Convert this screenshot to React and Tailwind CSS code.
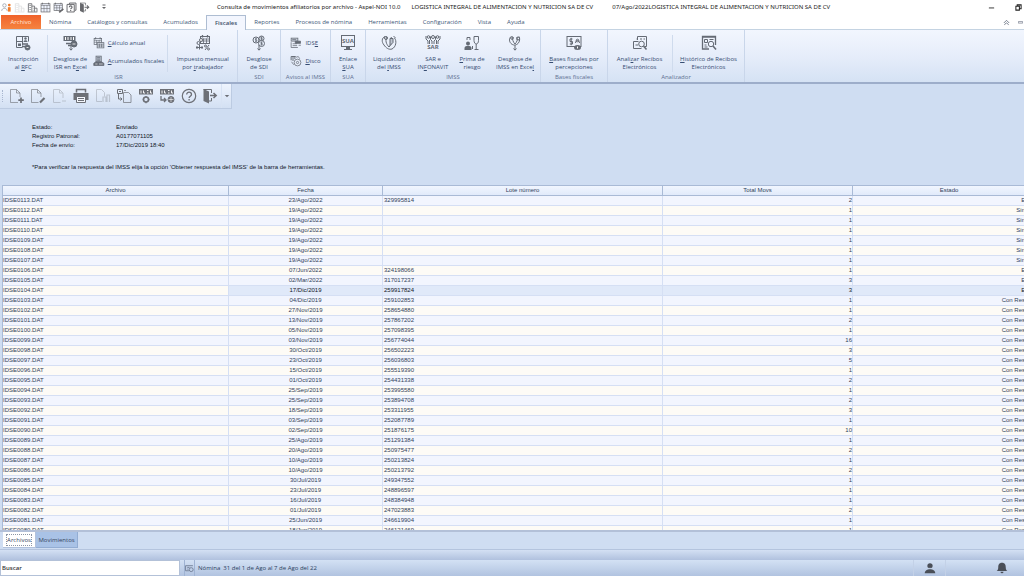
import React from "react";

function Icon({ className = "size-4", children }) {
  return (
    <svg viewBox="0 0 16 16" className={`shrink-0 ${className}`} fill="none" stroke="currentColor" strokeWidth="1" aria-hidden="true">
      {children}
    </svg>
  );
}

const solid = { fill: "currentColor", stroke: "none" };

/* small coin with a peso mark */
const Coin = ({ x, y, r = 3 }) => (
  <g>
    <circle cx={x} cy={y} r={r} fill="#e9f0fc" />
    <path d={`M${x + 1} ${y - 1.3}h-1.6v1.3h1.4v1.3h-1.8M${x} ${y - 2}v4`} strokeWidth="0.7" />
  </g>
);
const Cal = ({ x, y, w, h }) => (
  <g>
    <rect x={x} y={y + 1} width={w} height={h - 1} fill="#eef3fd" />
    <path d={`M${x} ${y + 3.5}h${w}M${x + w / 3} ${y + 3}v${h - 3}M${x + (2 * w) / 3} ${y + 3}v${h - 3}M${x} ${y + (h + 3) / 2}h${w}`} strokeWidth="0.8" />
    <path d={`M${x + 2} ${y - 0.5}v2.5M${x + w - 2} ${y - 0.5}v2.5`} strokeWidth="1.3" />
  </g>
);

const icons = {
  rfc: (
    <>
      <path d="M1.500 1.500h12v5M1.500 1.500v11h6M1.500 6.500h6M7.500 1.500v9" />
      <rect x="3" y="8.500" width="3" height="2.500" {...solid} />
      <path d="M8.500 7c0-2.500 4-2.500 4 0z" {...solid} />
      <circle cx="10.500" cy="3.500" r="1.200" {...solid} />
      <path d="M7 9h6M7 11.500h4" strokeWidth="1.500" />
      <circle cx="12.500" cy="12.500" r="2.500" fill="currentColor" />
      <path d="M11.500 12.500h2" stroke="#fff" strokeWidth="0.800" />
    </>
  ),
  desgloseIsr: (
    <>
      <rect x="1.500" y="1" width="12" height="5" {...solid} />
      <path d="M3.500 2v3M6 2v3M9 2v3M11.500 2v3" stroke="#fff" />
      <path d="M4 8.500h5M6 10.500h3" strokeWidth="1.400" />
      <circle cx="12" cy="9" r="3" fill="currentColor" />
      <path d="M10.500 9h3" stroke="#fff" strokeWidth="0.800" />
      <path d="M9 11v4M7.500 13.500l1.500 1.700 1.500-1.700" />
    </>
  ),
  calculo: (
    <>
      <Cal x={1.5} y={1} w={10} h={9} />
      <rect x="5.500" y="7.500" width="9" height="7" fill="#eef3fd" />
      <path d="M5.500 9.500h9M8.500 9v5M11.500 9v5M5.500 12h9" />
    </>
  ),
  acumulados: (
    <>
      <rect x="4" y="1.500" width="7" height="8" fill="#b5bdca" />
      <path d="M5.500 3.500h4M5.500 5.500h4M5.500 7.500h4" />
      <path d="M1 14v-3l3-2h7l3.500 2v3z" fill="currentColor" />
      <path d="M3 12h3M8 12h5" stroke="#fff" strokeWidth="0.800" />
    </>
  ),
  impuesto: (
    <>
      <Cal x={5.500} y={0.5} w={9} h={8} />
      <circle cx="3.500" cy="8" r="1.500" />
      <circle cx="6" cy="5" r="1.500" fill="#fff" />
      <path d="M1 12.500h7M4.500 9.500v5M2 11v3M7 11v3" />
      <path d="M14 10l-4 5" />
      <circle cx="10.500" cy="11" r="1" />
      <circle cx="13.500" cy="14" r="1" />
    </>
  ),
  sdi: (
    <>
      <Coin x={5} y={5} />
      <Coin x={10.500} y={3.500} r={2.5} />
      <Coin x={10.500} y={8.500} />
      <path d="M8 10v5M6.500 13.500l1.500 1.700 1.500-1.700" />
    </>
  ),
  idse: (
    <>
      <rect x="1.500" y="1.500" width="9" height="4" fill="#c5ccd7" />
      <path d="M3 3.500h5M1.500 7v7h9M3.500 9h6M3.500 11.500h6" />
      <path d="M7 5.500h7v3H7z" fill="currentColor" />
      <path d="M11.500 11h3" />
    </>
  ),
  disco: (
    <>
      <path d="M1.500 2v5M4 2v6M6.500 1.500v4M1.500 2h6" strokeWidth="1.300" />
      <circle cx="10" cy="10" r="4.500" fill="#e5ecf8" />
      <circle cx="10" cy="10" r="1.500" />
      <path d="M2 9l3 4M8 3l3-1 2 3" />
    </>
  ),
  liquidacion: (
    <>
      <path d="M4 1.500C.5 3 .5 7 3 10c2 3 5 5 8 4 4-2 5-8 2.500-11" />
      <path d="M6 2c-2 3-1 7 2 10M10 2c2 3 1 7-2 10" />
      <circle cx="5" cy="3" r="1.500" />
      <path d="M9 3.500h3v4l-3 3z" fill="#c0c7d3" />
      <path d="M12.500 1l2 2" />
    </>
  ),
  desgloseImss: (
    <>
      <path d="M4 1.500c-2 2-2 5 0 7s5 2 7 0 2-5 1-7" />
      <path d="M6 2c-1 2 0 5 2 7M10 2c1 2 0 5-2 7" />
      <circle cx="5" cy="3" r="1.300" />
      <circle cx="11" cy="3.500" r="1.500" />
      <path d="M8 10v5M6.500 13.500l1.500 1.700 1.500-1.700" />
    </>
  ),
  prima: (
    <>
      <circle cx="4" cy="8.500" r="2" {...solid} />
      <path d="M.5 15v-2c0-3 7-3 7 0v2z" {...solid} />
      <path d="M3 5V2.500h3V5M10 1.500h4.500v4c0 2-1 3.500-2.200 3.500S10 7.500 10 5.500z" />
      <path d="M12.200 9v5M10.500 14.500h4M8.500 11v3" />
    </>
  ),
  bases: (
    <>
      <rect x="1" y="1.500" width="14" height="10" />
      <path d="M6.500 4H4v2.500h2.500V9H3.800M5.200 2.800v7.500" />
      <path d="M9.500 8a2 2.500 0 0 1 4 0" />
      <circle cx="11.500" cy="5.500" r="1.300" />
      <ellipse cx="11.500" cy="12.500" rx="3.500" ry="2.500" {...solid} />
      <path d="M11.500 11.500v2" stroke="#fff" />
    </>
  ),
  analizar: (
    <>
      <path d="M5.500 5V1.500h9v10h-1.500M8 4h2M11.500 4h1.500" />
      <path d="M6.500 6.500h-5v7h8M3.500 10h2.500M5.500 4h-1" />
      <circle cx="9.500" cy="9" r="2.800" fill="#eef3fd" />
      <path d="M11.500 11l3 3.500" strokeWidth="1.600" />
    </>
  ),
  historico: (
    <>
      <path d="M8 14H1.500V1.500h13V10M1.500 2h13" strokeWidth="1.300" />
      <path d="M3.500 4.500h3v3h-3zM8.500 4.500h4M3.500 10h2M3.500 12h3" />
      <circle cx="10" cy="9" r="2.700" fill="#eef3fd" />
      <path d="M12 11l3 3.500" strokeWidth="1.600" />
    </>
  ),
  newFile: (
    <>
      <path d="M9 14.500H1.500v-13h6l3.500 3.500v4M7.500 1.500v3.500H11" strokeOpacity="0.600" />
      <path d="M12 9.500v5.500M9.300 12.200h5.500" strokeWidth="1.700" />
    </>
  ),
  editFile: (
    <>
      <path d="M8.500 14.500H1.500v-13h6l3.500 3.500v4M7.500 1.500v3.500H11" strokeOpacity="0.600" />
      <path d="M10 14.500l4.500-4.500" strokeWidth="2.200" />
    </>
  ),
  delFile: <path d="M8.500 14.500H1.500v-13h6l3.500 3.500v5M7.500 1.500v3.500H11M10 13h4" />,
  print: (
    <>
      <path d="M3.500 4.500v-3h9v3" strokeWidth="1.500" />
      <path d="M.5 5h15v7h-15z" {...solid} />
      <path d="M3.500 8.500h9v6h-9z" fill="#f5f8fe" />
      <path d="M5 10.500h6M5 12.500h6" />
    </>
  ),
  copy: (
    <>
      <path d="M7 13.500H1.500v-12h5l3 3v4" />
      <path d="M8 14V9h3v5M12 14V7h2.500v7" strokeWidth="1.200" />
    </>
  ),
  transfer: (
    <>
      <path d="M1.500 1.500h5v4h-5zM2.500 6v5h3M4.500 9.500L6 11l-1.500 1.500M3 3.500h2" />
      <path d="M7.500 4.500h5l2.500 2.500v7.500H7.500zM8 2.500h2" strokeOpacity="0.700" />
    </>
  ),
  idseGear: (
    <>
      <rect x="1" y="1" width="14" height="5.500" {...solid} />
      <path d="M3 2.500v3M5.500 2.500v2.500h1.500M9 2.500h1.500M9 5h1.500M12.500 2.500v2.500h1.500" stroke="#fff" strokeWidth="0.900" />
      <circle cx="8" cy="11.500" r="2.500" strokeWidth="1.600" />
      <path d="M8 8v1M8 14v1.200M4.700 11.500h1M10.500 11.500h1" strokeWidth="1.300" />
    </>
  ),
  idseWorld: (
    <>
      <rect x="1" y="1" width="14" height="5.500" {...solid} />
      <path d="M3 2.500v3M5.500 2.500v2.500h1.500M9 2.500h1.500M9 5h1.500M12.500 2.500v2.500h1.500" stroke="#fff" strokeWidth="0.900" />
      <path d="M2 8v4h5M5 10l2 2-2 2" strokeWidth="1.300" />
      <circle cx="12" cy="11.500" r="3" fill="currentColor" />
      <path d="M9.500 11.500h5M12 9v5" stroke="#fff" strokeWidth="0.600" />
    </>
  ),
  exit: (
    <>
      <path d="M1.500 1.500h8v3.500M9.500 10v3h-3" />
      <path d="M1.500 1l5.500 2.500v12L1.500 13z" {...solid} />
      <path d="M8 7.500h5.500M11.500 5l2.700 2.500-2.700 2.500" strokeWidth="1.500" />
    </>
  ),
  doc: (
    <path d="M2 14V2.500h5V14M7 6h4v8M11 9h3.500v5M1 14.500h14M3.500 5h2M3.500 8h2M3.500 11h2M8.500 9h1M8.500 12h1" strokeWidth="1.200" />
  ),
  cal: <Cal x={1.5} y={1.5} w={13} h={13} />,
  calEdit: (
    <>
      <Cal x={1.5} y={1.5} w={12} h={11} />
      <path d="M9 15l6-5" strokeWidth="2.500" />
    </>
  ),
  helpPages: (
    <>
      <path d="M5 3V1.500h9.500V12H13" strokeWidth="1.400" />
      <path d="M1.500 3.500H12v11H1.500z" strokeWidth="1.400" />
      <path d="M4.800 7.500c0-2.500 4-2.500 4 0 0 1.500-2 1.500-2 3M6.800 11.500v1.500" strokeWidth="1.600" />
    </>
  ),
};

const MAIN_TABS = ["Nómina", "Catálogos y consultas", "Acumulados", "Fiscales", "Reportes", "Procesos de nómina", "Herramientas", "Configuración", "Vista", "Ayuda"];

/* An underscore marks the access key that follows it. */
function Label({ text }) {
  const at = text.indexOf("_");
  if (at < 0) return <>{text}</>;
  return (
    <>
      {text.slice(0, at)}
      <u>{text[at + 1]}</u>
      {text.slice(at + 2)}
    </>
  );
}

function Tool({ icon, lines, width, children }) {
  return (
    <button type="button" className={`flex shrink-0 flex-col items-center gap-1 whitespace-nowrap ${width}`}>
      <span className="flex text-[#656b75]">{children || <Icon>{icons[icon]}</Icon>}</span>
      <span className="block text-center leading-[8px]">
        {lines.map((l) => (
          <span key={l} className="block"><Label text={l} /></span>
        ))}
      </span>
    </button>
  );
}

function SmallTool({ icon, text }) {
  return (
    <button type="button" className="flex items-center gap-[3px] whitespace-nowrap">
      <span className="flex text-[#656b75]"><Icon className="size-3">{icons[icon]}</Icon></span>
      <span><Label text={text} /></span>
    </button>
  );
}

function Group({ title, width, children }) {
  return (
    <section className={`flex shrink-0 flex-col border-r border-[#c9d6ea] pt-[5px] ${width}`}>
      <div className="flex h-[37px] justify-around">{children}</div>
      <h2 className="text-center leading-[10px] text-[#5f7192]">{title}</h2>
    </section>
  );
}

const Divider = () => <span className="w-px self-stretch bg-[#cfdbed]" />;

const ROWS = [
  ["0113", "23/Ago/2022", "329995814", 2, "Enviado"],
  ["0112", "19/Ago/2022", "", 1, "Sin enviar"],
  ["0111", "19/Ago/2022", "", 1, "Sin enviar"],
  ["0110", "19/Ago/2022", "", 1, "Sin enviar"],
  ["0109", "19/Ago/2022", "", 1, "Sin enviar"],
  ["0108", "19/Ago/2022", "", 1, "Sin enviar"],
  ["0107", "19/Ago/2022", "", 1, "Sin enviar"],
  ["0106", "07/Jun/2022", "324198066", 1, "Enviado"],
  ["0105", "02/Mar/2022", "317017237", 3, "Enviado"],
  ["0104", "17/Dic/2019", "259917824", 3, "Enviado"],
  ["0103", "04/Dic/2019", "259102853", 1, "Con Respuesta"],
  ["0102", "27/Nov/2019", "258654880", 1, "Con Respuesta"],
  ["0101", "13/Nov/2019", "257867202", 2, "Con Respuesta"],
  ["0100", "05/Nov/2019", "257098395", 1, "Con Respuesta"],
  ["0099", "03/Nov/2019", "256774044", 16, "Con Respuesta"],
  ["0098", "30/Oct/2019", "256502223", 3, "Con Respuesta"],
  ["0097", "23/Oct/2019", "256036803", 5, "Con Respuesta"],
  ["0096", "15/Oct/2019", "255519390", 1, "Con Respuesta"],
  ["0095", "01/Oct/2019", "254431338", 2, "Con Respuesta"],
  ["0094", "25/Sep/2019", "253995580", 1, "Con Respuesta"],
  ["0093", "25/Sep/2019", "253894708", 2, "Con Respuesta"],
  ["0092", "18/Sep/2019", "253311955", 3, "Con Respuesta"],
  ["0091", "03/Sep/2019", "252087789", 1, "Con Respuesta"],
  ["0090", "02/Sep/2019", "251876175", 10, "Con Respuesta"],
  ["0089", "25/Ago/2019", "251291384", 1, "Con Respuesta"],
  ["0088", "20/Ago/2019", "250975477", 2, "Con Respuesta"],
  ["0087", "10/Ago/2019", "250213824", 1, "Con Respuesta"],
  ["0086", "10/Ago/2019", "250213792", 2, "Con Respuesta"],
  ["0085", "30/Jul/2019", "249347552", 1, "Con Respuesta"],
  ["0084", "23/Jul/2019", "248896597", 1, "Con Respuesta"],
  ["0083", "16/Jul/2019", "248384948", 1, "Con Respuesta"],
  ["0082", "01/Jul/2019", "247023883", 2, "Con Respuesta"],
  ["0081", "25/Jun/2019", "246619904", 1, "Con Respuesta"],
  ["0080", "18/Jun/2019", "246121469", 1, "Con Respuesta"],
];
const SELECTED = "0104";

const TOOLBAR = [
  ["newFile", "Nuevo", false],
  ["editFile", "Editar", false],
  ["delFile", "Eliminar", true],
  ["print", "Imprimir", false],
  ["copy", "Copiar", true],
  ["transfer", "Transferir", false],
  ["idseGear", "Configurar IDSE", false],
  ["idseWorld", "Obtener respuesta del IMSS", false],
  ["help", "Ayuda", false],
  ["exit", "Salir", false],
];

function TitleBar() {
  const quick = [["doc", "Departamentos", true], ["doc", "Empresas", false], ["cal", "Calendario", false], ["calEdit", "Editar calendario", false], ["helpPages", "Ayuda", false], ["exit", "Salir", false]];
  return (
    <header className="grid h-[14px] shrink-0 grid-cols-[215px_1fr_auto] items-center bg-white text-[#222]">
      <div className="flex items-center gap-[2px] pl-[1px] text-[#66676b]">
        <button type="button" aria-label="Trabajadores" className="flex">
          <Icon className="size-[11px]">
            <circle cx="5" cy="5" r="2.500" stroke="#8b93a0" />
            <path d="M1 13c0-5 8-5 8 0" stroke="#8b93a0" />
            <circle cx="12" cy="4.500" r="2" fill="#f07c2c" stroke="none" />
            <path d="M10 7.500h4V14h-4z" fill="#f07c2c" stroke="none" />
          </Icon>
        </button>
        {quick.map(([k, label, off], i) => (
          <button key={i} type="button" aria-label={label} disabled={off} className="flex disabled:opacity-20">
            <Icon className="size-[11px]">{icons[k]}</Icon>
          </button>
        ))}
        <button type="button" aria-label="Personalizar" className="ml-2 flex">
          <Icon className="size-[8px]"><path d="M5 4h6" strokeWidth="2" /><path d="M4 8h8l-4 4z" {...solid} /></Icon>
        </button>
      </div>
      <h1 className="flex gap-[11px] whitespace-nowrap pl-[2px] font-['Noto_Sans',sans-serif] text-[6px] leading-[12px]">
        <span>Consulta de movimientos afiliatorios por archivo - Aspel-NOI 10.0</span>
        <span>LOGISTICA INTEGRAL DE ALIMENTACION Y NUTRICION SA DE CV</span>
        <span className="pl-2">07/Ago/2022LOGISTICA INTEGRAL DE ALIMENTACION Y NUTRICION SA DE CV</span>
      </h1>
      <div className="flex items-center gap-5 pr-[2px]">
        <button type="button" aria-label="Minimizar" className="flex"><Icon className="size-[7px]"><path d="M2 9h12" strokeWidth="2" /></Icon></button>
        <button type="button" aria-label="Restaurar" className="flex"><Icon className="size-[7px]"><path d="M2 5h8v9H2zM5 5V2h9v9h-4" strokeWidth="2.300" /></Icon></button>
      </div>
    </header>
  );
}

function MainTabs() {
  return (
    <nav className="flex h-4 shrink-0 items-end border-b border-[#c4d3e2] bg-white pl-[1px] text-[#405878]">
      <button type="button" className="h-[14px] w-10 bg-linear-to-b from-[#f0622a] to-[#f5833f] text-[#ffe6d6]">Archivo</button>
      {MAIN_TABS.map((t) =>
        t === "Fiscales" ? (
          <button key={t} type="button" aria-current="page" className="-mb-px h-[15px] border border-b-0 border-[#aebdd2] bg-[#f3f6fe] px-2 font-semibold text-[#3d4f69]">{t}</button>
        ) : (
          <button key={t} type="button" className="h-[14px] whitespace-nowrap px-2">{t}</button>
        )
      )}
      <div className="ml-auto flex h-[14px] items-center gap-2 pr-[1px] text-[#666f80]">
        <button type="button" aria-label="Contraer cinta" className="flex"><Icon className="size-[7px]"><path d="M2 9l6-6 6 6M3 13l5-4 5 4" strokeWidth="2" /></Icon></button>
        <button type="button" aria-label="Minimizar ventana" className="flex"><Icon className="size-[5px]"><path d="M1 5h14v5H1z" strokeWidth="2" /></Icon></button>
      </div>
    </nav>
  );
}

function Ribbon() {
  return (
    <div className="flex h-[54px] shrink-0 overflow-hidden border-b-2 border-[#9dadca] bg-linear-to-b from-[#f2f6fe] via-[#e6edfa] to-[#d5e2f4] text-[#364d72]">
      <Group title="ISR" width="w-[238px]">
        <Tool icon="rfc" lines={["Inscripción", "al _RFC"]} width="w-[46px]" />
        <Divider />
        <Tool icon="desgloseIsr" lines={["Desglose de", "ISR en E_xcel"]} width="w-[44px]" />
        <div className="flex w-[74px] shrink-0 flex-col gap-[6px] pt-[2px]">
          <SmallTool icon="calculo" text="_Cálculo anual" />
          <SmallTool icon="acumulados" text="_Acumulados fiscales" />
        </div>
        <Divider />
        <Tool icon="impuesto" lines={["Impuesto mensual", "por _trabajador"]} width="w-[68px]" />
      </Group>
      <Group title="SDI" width="w-[43px]">
        <Tool icon="sdi" lines={["Desglose", "de SDI"]} width="w-[42px]" />
      </Group>
      <Group title="Avisos al IMSS" width="w-[50px]">
        <div className="flex flex-col gap-[6px] pt-[2px]">
          <SmallTool icon="idse" text="IDS_E" />
          <SmallTool icon="disco" text="_Disco" />
        </div>
      </Group>
      <Group title="SUA" width="w-[35px]">
        <Tool lines={["Enlace", "_SUA"]} width="w-[34px]">
          <span className="flex h-4 flex-col items-center">
            <span className="border border-current text-[6px] leading-[10px] font-bold">SUA</span>
            <span className="h-[2px] w-1 bg-current" />
            <span className="h-px w-2 bg-current" />
          </span>
        </Tool>
      </Group>
      <Group title="IMSS" width="w-[175px]">
        <Tool icon="liquidacion" lines={["Liquidación", "del _IMSS"]} width="w-[44px]" />
        <Tool lines={["SAR e", "IN_FONAVIT"]} width="w-[40px]">
          <span className="flex h-4 flex-col items-center">
            <svg viewBox="0 0 16 9" className="h-[9px] w-4" fill="none" stroke="currentColor" aria-hidden="true">
              <circle cx="3.500" cy="2" r="1.300" />
              <circle cx="8" cy="2" r="1.500" />
              <circle cx="12.500" cy="2" r="1.300" />
              <path d="M1 1v3l2 2v3M15 1v3l-2 2v3M5.500 1.500v3L7 6v3M10.500 1.500v3L9 6v3M4.500 5v4M11.500 5v4" />
            </svg>
            <span className="text-[6px] leading-[7px] font-bold">SAR</span>
          </span>
        </Tool>
        <Tool icon="prima" lines={["_Prima de", "riesgo"]} width="w-[34px]" />
        <Tool icon="desgloseImss" lines={["Desglose de", "IMSS en Exce_l"]} width="w-[48px]" />
      </Group>
      <Group title="Bases fiscales" width="w-[67px]">
        <Tool icon="bases" lines={["_Bases fiscales por", "percepciones"]} width="w-[66px]" />
      </Group>
      <Group title="Analizador" width="w-[137px]">
        <Tool icon="analizar" lines={["Anali_zar Recibos", "Electrónicos"]} width="w-[62px]" />
        <Divider />
        <Tool icon="historico" lines={["_Histórico de Recibos", "Electrónicos"]} width="w-[70px]" />
      </Group>
    </div>
  );
}

function ToolBar() {
  return (
    <div role="toolbar" className="flex h-[25px] w-[232px] shrink-0 items-center border-r border-b border-[#bccbe2] bg-linear-to-b from-[#eef4fe] to-[#d3e0f3] text-[#6d7077]">
      <span className="ml-[2px] h-3 border-l border-dotted border-[#a9b7d0]" />
      <div className="flex flex-1 justify-around pl-[3px]">
        {TOOLBAR.map(([k, label, off]) => (
          <button key={k} type="button" aria-label={label} disabled={off} className="flex disabled:opacity-30">
            <Icon>
              {k === "help" ? (
                <>
                  <circle cx="8" cy="8" r="6.700" strokeWidth="1.200" />
                  <path d="M5.700 6.500c0-3.200 4.800-3 4.800 0 0 1.800-2.400 1.700-2.400 3.500M8.100 11v1.500" strokeWidth="1.300" />
                </>
              ) : (
                icons[k]
              )}
            </Icon>
          </button>
        ))}
      </div>
      <button type="button" aria-label="Más botones" className="flex h-full w-[10px] items-center justify-center border-l border-[#d8e3f4]">
        <Icon className="size-[6px]"><path d="M2 5h12l-6 6z" {...solid} /></Icon>
      </button>
    </div>
  );
}

function Details() {
  return (
    <section className="h-[76px] shrink-0 pt-[14px] pl-8 text-[6px] leading-[9px] text-[#10161f]">
      <dl className="grid grid-cols-[84px_1fr]">
        <dt>Estado:</dt><dd>Enviado</dd>
        <dt>Registro Patronal:</dt><dd>A0177071105</dd>
        <dt>Fecha de envío:</dt><dd>17/Dic/2019 18:40</dd>
      </dl>
      <p className="pt-[13px]">*Para verificar la respuesta del IMSS elija la opción 'Obtener respuesta del IMSS' de la barra de herramientas.</p>
    </section>
  );
}

function Grid() {
  const line = "border-r border-b border-[#d5dff4] p-0";
  return (
    <div className="min-h-0 flex-1 overflow-hidden border-b-2 border-[#b3c0d8] pl-[2px]">
      <table className="w-[calc(100%+22px)] table-fixed border-separate border-spacing-0 border-l border-[#a9bad6] text-[6px] leading-[9px] text-[#303f5a]">
        <colgroup>
          <col className="w-[226px]" />
          <col className="w-[154px]" />
          <col className="w-[280px]" />
          <col className="w-[190px]" />
          <col />
        </colgroup>
        <thead>
          <tr className="bg-linear-to-b from-[#f3f7ff] to-[#dfe9fa]">
            {["Archivo", "Fecha", "Lote número", "Total Movs", "Estado"].map((h) => (
              <th key={h} scope="col" className="border-t border-r border-b border-[#a9bad6] p-0 font-normal">{h}</th>
            ))}
          </tr>
        </thead>
        <tbody>
          {ROWS.map(([id, date, lot, n, state]) => {
            const sel = id === SELECTED;
            return (
              <tr key={id} className={sel ? "h-[10px] bg-[#e0e9f9] text-[#10161f]" : "h-[10px] odd:bg-[#f2f5fe] even:bg-[#fdfbf6]"}>
                <td className={sel ? `${line} bg-[#fdfbf6] text-[#303f5a]` : line}>IDSE{id}.DAT</td>
                <td className={`${line} text-center`}>{date}</td>
                <td className={`${line} pl-[1px]`}>{lot}</td>
                <td className={`${line} text-right`}>{n}</td>
                <td className={`${line} pr-[2px] text-right`}>{state}</td>
              </tr>
            );
          })}
        </tbody>
      </table>
    </div>
  );
}

function Footer() {
  return (
    <footer className="shrink-0">
      <div role="tablist" className="flex h-4 pl-[3px] text-[6px] text-[#36455f]">
        <button type="button" role="tab" aria-selected="true" className="flex w-[33px] items-center justify-center border-r border-b border-[#b2c2dc] bg-white">
          <span className="border border-dotted border-[#8c95a5] leading-[10px]">Archivos</span>
        </button>
        <button type="button" role="tab" aria-selected="false" className="w-[42px] border-r border-b border-[#93add3] bg-[#a9c2e6]">Movimientos</button>
      </div>
      <div className="mt-[1px] h-[11px] border-t border-[#b4c4de] bg-linear-to-b from-[#d3e0f3] to-[#b0c1de]" />
      <div className="flex h-4 items-center bg-linear-to-b from-[#d3e1f4] to-[#b1c3e0]">
        <input type="search" aria-label="Buscar" placeholder="Buscar" className="h-full w-[180px] border border-[#b3c1d8] bg-white px-[1px] text-[6px] font-semibold text-[#222] outline-none placeholder:text-[#333]" />
        <span className="ml-[4px] flex h-full w-[11px] items-center justify-center border-x border-[#9fb3d3] text-[#6b7890]">
          <Icon className="size-[9px]">
            <path d="M1 3h13M1 3v9h6M4 6h4M4 9h2" strokeWidth="1.500" />
            <circle cx="11" cy="10" r="3.500" strokeWidth="1.500" />
          </Icon>
        </span>
        <p className="pl-[3px] whitespace-pre text-[#2c3f5e]">Nómina  31 del 1 de Ago al 7 de Ago del 22</p>
        <div className="ml-auto flex h-full items-center text-[#4a4f58]">
          <button type="button" aria-label="Usuario" className="flex h-full w-[33px] items-center justify-center border-x border-[#c3d1e7]">
            <Icon className="size-3">
              <circle cx="8" cy="5" r="3.500" {...solid} />
              <path d="M1 15c0-7 14-7 14 0z" {...solid} />
              <path d="M5 8.500h6" stroke="#c4d2e8" strokeWidth="1.200" />
            </Icon>
          </button>
          <button type="button" aria-label="Notificaciones" className="flex h-full w-[78px] items-center justify-center pl-[34px]">
            <Icon className="size-3">
              <path d="M8 1c-4 0-5 3-5 6 0 3-1 4-2 5h14c-1-1-2-2-2-5 0-3-1-6-5-6zM6 13a2 2 0 0 0 4 0z" {...solid} />
            </Icon>
          </button>
        </div>
      </div>
    </footer>
  );
}

export default function App() {
  return (
    <main className="flex h-screen flex-col overflow-hidden bg-[#cfddf2] font-['Open_Sans',sans-serif] text-[6px] leading-[8px]">
      <TitleBar />
      <MainTabs />
      <Ribbon />
      <ToolBar />
      <div className="flex min-h-0 flex-1 flex-col font-['Liberation_Sans',Arial,sans-serif]">
        <Details />
        <Grid />
      </div>
      <Footer />
    </main>
  );
}
